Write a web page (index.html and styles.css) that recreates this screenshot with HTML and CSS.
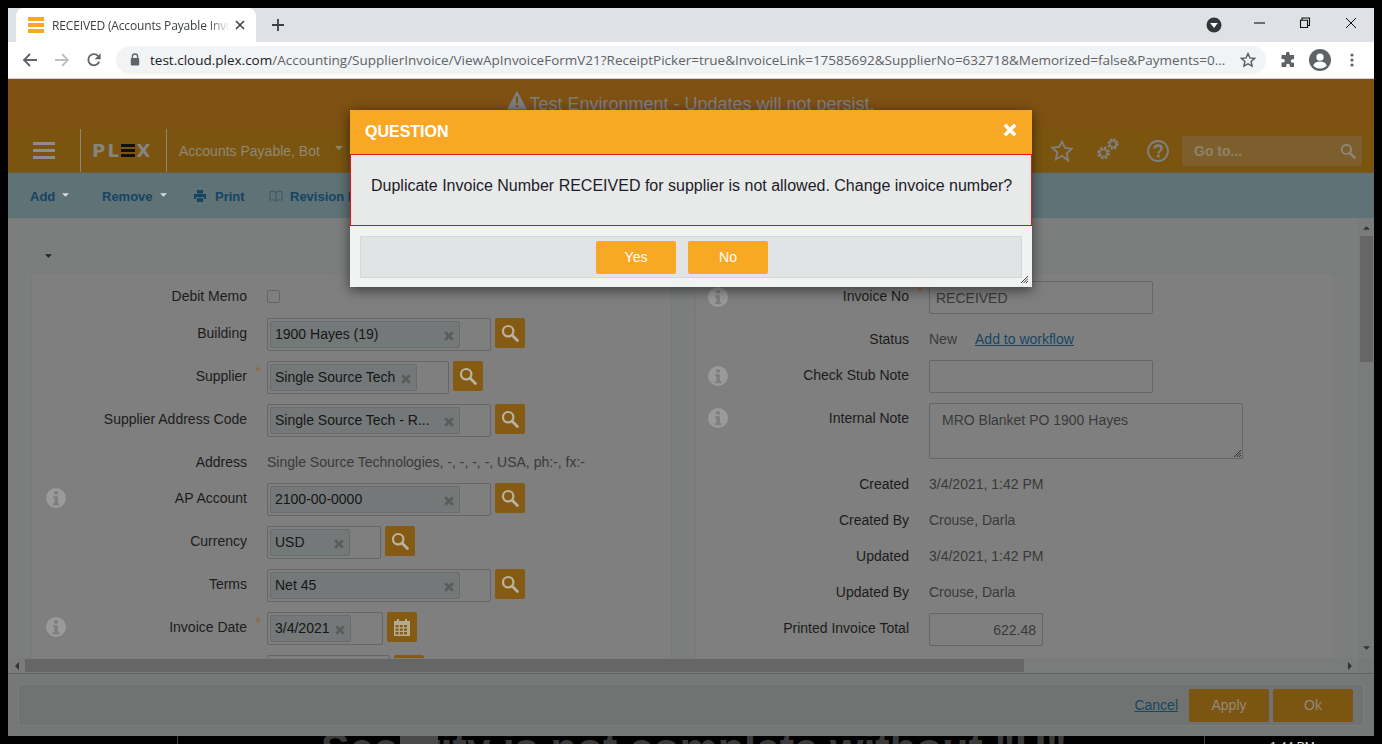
FILE: index.html
```html
<!DOCTYPE html>
<html lang="en">
<head>
<meta charset="utf-8">
<title>RECEIVED (Accounts Payable Invoice)</title>
<link rel="stylesheet" href="styles.css">
</head>
<body>
<svg class="defs" width="0" height="0" aria-hidden="true">
  <symbol id="i-search" viewBox="0 0 18 18"><circle cx="7.2" cy="7.2" r="5.200" fill="none" stroke="currentColor" stroke-width="2.200"/><path d="M11 11l5.400 5.400" stroke="currentColor" stroke-width="2.800" stroke-linecap="round"/></symbol>
  <symbol id="i-x" viewBox="0 0 10 10"><path d="M1.200 1.200l7.600 7.600M8.800 1.200l-7.600 7.600" stroke="currentColor" stroke-width="2.800"/></symbol>
  <symbol id="i-info" viewBox="0 0 20 20"><circle cx="10" cy="10" r="10" fill="currentColor"/><rect x="8" y="3.200" width="4" height="3.400" rx="1" fill="#7f7f7f"/><path d="M7 8.200h5v7h1.400v2H6.800v-2h1.600v-5H7z" fill="#7f7f7f"/></symbol>
  <symbol id="i-caret" viewBox="0 0 8 4"><path d="M0 0h8L4 4z" fill="currentColor"/></symbol>
</svg>

<div class="window">
  <header class="tabstrip">
    <div class="tab">
      <span class="favicon"><i></i><i></i><i></i></span>
      <span class="tab-title">RECEIVED (Accounts Payable Invoice)</span>
      <svg class="tab-close" viewBox="0 0 10 10"><path d="M1 1l8 8M9 1l-8 8" stroke="#3c4043" stroke-width="1.600"/></svg>
    </div>
    <svg class="new-tab" viewBox="0 0 12 12"><path d="M6 0v12M0 6h12" stroke="#3c4043" stroke-width="1.800"/></svg>
    <svg class="download" viewBox="0 0 16 16"><circle cx="8" cy="8" r="7.500" fill="#35363a"/><path d="M4.200 6h7.600L8 11z" fill="#fff"/></svg>
    <div class="win-btns">
      <svg viewBox="0 0 12 12"><path d="M1 6h11" stroke="#111" stroke-width="1.100"/></svg>
      <svg viewBox="0 0 12 12"><path d="M3 3V1h7.500v7.500H8.500M1.500 3.200h7v7.300h-7z" fill="none" stroke="#111" stroke-width="1.100"/></svg>
      <svg viewBox="0 0 12 12"><path d="M1 1l10 10M11 1L1 11" stroke="#111" stroke-width="1"/></svg>
    </div>
  </header>

  <div class="toolbar">
    <svg class="nav-ic" viewBox="0 0 16 16"><path d="M15 8H2M8 2L2 8l6 6" fill="none" stroke="#5f6368" stroke-width="1.800"/></svg>
    <svg class="nav-ic" viewBox="0 0 16 16"><path d="M1 8h13M8 2l6 6-6 6" fill="none" stroke="#bdc1c6" stroke-width="1.800"/></svg>
    <svg class="nav-ic" viewBox="0 0 16 16"><path d="M13.200 9.600A5.600 5.600 0 1 1 12 3.900" fill="none" stroke="#5f6368" stroke-width="1.800"/><path d="M14.600 1.200v6h-6z" fill="#5f6368"/></svg>
    <div class="omnibox">
      <svg class="lock" viewBox="0 0 10 13"><path d="M2.400 5.500V3.600a2.600 2.600 0 0 1 5.200 0v1.900" fill="none" stroke="#5f6368" stroke-width="1.300"/><rect x="0.800" y="5" width="8.400" height="7.400" rx="1" fill="#5f6368"/></svg>
      <span class="url"><b>test.cloud.plex.com</b>/Accounting/SupplierInvoice/ViewApInvoiceFormV21?ReceiptPicker=true&amp;InvoiceLink=17585692&amp;SupplierNo=632718&amp;Memorized=false&amp;Payments=0...</span>
      <svg class="omni-star" viewBox="0 0 16 16"><path d="M8 1.600l1.900 4.300 4.700.5-3.500 3.100 1 4.600L8 11.800l-4.100 2.300 1-4.600L1.400 6.400l4.700-.5z" fill="none" stroke="#5f6368" stroke-width="1.500"/></svg>
    </div>
    <svg class="ext" viewBox="0 0 16 16"><path d="M6 1.500a1.800 1.800 0 0 1 3.600 0V3H14v4.200h-1.400a1.800 1.800 0 0 0 0 3.600H14V15H9.800v-1.400a1.800 1.800 0 0 0-3.600 0V15H1.500v-4.400H3a1.800 1.800 0 0 0 0-3.600H1.500V3H6z" fill="#5f6368"/></svg>
    <svg class="avatar" viewBox="0 0 22 22"><circle cx="11" cy="11" r="11" fill="#5f6368"/><circle cx="11" cy="8.200" r="3.600" fill="#fff"/><path d="M4.200 16.200c1.400-2.500 4-3.600 6.800-3.600s5.400 1.100 6.800 3.600A8.600 8.600 0 0 1 11 19.400a8.600 8.600 0 0 1-6.800-3.200z" fill="#fff"/></svg>
    <svg class="dots" viewBox="0 0 4 14"><circle cx="2" cy="2" r="1.600" fill="#5f6368"/><circle cx="2" cy="7" r="1.600" fill="#5f6368"/><circle cx="2" cy="12" r="1.600" fill="#5f6368"/></svg>
  </div>

  <main class="page">
    <div class="banner">
      <svg class="warn" viewBox="0 0 20 20"><path d="M10 0.500L20 19.500H0z" fill="#7e7e7e"/><path d="M8.800 6.500h2.400l-.4 7H9.200zM8.800 15h2.400v2.500H8.800z" fill="#7f5112"/></svg>
      <span>Test Environment - Updates will not persist.</span>
    </div>

    <nav class="topnav">
      <div class="burger"><i></i><i></i><i></i></div>
      <div class="logo"><span class="logo-pl">PL</span><span class="logo-e"><i></i><i></i><i></i></span><span>X</span></div>
      <div class="user">Accounts Payable, Bot<svg class="user-caret"><use href="#i-caret"/></svg></div>
      <div class="nav-right">
        <svg class="nav-star" viewBox="0 0 24 24"><path d="M12 2.500l2.900 6.400 6.900.8-5.100 4.700 1.400 6.900L12 16.800l-6.100 3.500 1.400-6.900-5.100-4.700 6.900-.8z" fill="none" stroke="#808080" stroke-width="1.800"/></svg>
        <svg class="nav-gears" viewBox="0 0 24 24"><circle cx="7.500" cy="16" r="5" fill="none" stroke="#808080" stroke-width="2.800" stroke-dasharray="2.400 1.500"/><circle cx="7.500" cy="16" r="3.600" fill="none" stroke="#808080" stroke-width="1.500"/><circle cx="17" cy="7" r="4.400" fill="none" stroke="#808080" stroke-width="2.600" stroke-dasharray="2.200 1.250"/><circle cx="17" cy="7" r="3.100" fill="none" stroke="#808080" stroke-width="1.400"/></svg>
        <svg class="nav-help" viewBox="0 0 24 24"><circle cx="12" cy="12" r="10" fill="none" stroke="#808080" stroke-width="1.800"/><path d="M8.500 9.500C8.700 7.500 10.200 6.500 12.100 6.500c2.100 0 3.500 1.200 3.500 3 0 2.500-3.200 2.600-3.200 5" fill="none" stroke="#808080" stroke-width="2.300"/><rect x="11" y="15.800" width="2.700" height="2.500" fill="#808080"/></svg>
        <div class="goto"><span>Go to...</span><svg><use href="#i-search"/></svg></div>
      </div>
    </nav>

    <div class="actions">
      <span class="act act-add">Add<svg class="act-caret"><use href="#i-caret"/></svg></span>
      <span class="act act-remove">Remove<svg class="act-caret"><use href="#i-caret"/></svg></span>
      <span class="act act-print"><svg class="act-ic" viewBox="0 0 12 12"><path d="M3 0h6v3.500H3zM0 4h12v5h-2V7H2v2H0zM3 8h6v4H3z" fill="#164463"/></svg>Print</span>
      <span class="act"><svg class="act-ic book" viewBox="0 0 14 12"><path d="M7 2.500C5.500 1.300 3 1 1 1.500v8.500c2-.5 4.500-.2 6 1 1.500-1.200 4-1.500 6-1V1.500C11 1 8.500 1.300 7 2.500zM7 2.500V11" fill="none" stroke="#3f5a68" stroke-width="1.100"/></svg>Revision History</span>
    </div>

    <div class="workspace">
      <div class="scroller">
        <svg class="collapse"><use href="#i-caret"/></svg>
        <div class="cards">
          <section class="card card-left">
            <div class="row row-check"><span class="slot"></span><label class="label">Debit Memo</label><span class="req"></span><span class="checkbox"></span></div>
            <div class="row"><span class="slot"></span><label class="label">Building</label><span class="req"></span>
              <div class="box box-wide"><span class="chip"><span class="chip-t">1900 Hayes (19)</span><svg class="chip-x"><use href="#i-x"/></svg></span></div><span class="pick"><svg><use href="#i-search"/></svg></span></div>
            <div class="row"><span class="slot"></span><label class="label">Supplier</label><span class="req">*</span>
              <div class="box box-sup"><span class="chip"><span class="chip-t">Single Source Tech</span><svg class="chip-x"><use href="#i-x"/></svg></span></div><span class="pick"><svg><use href="#i-search"/></svg></span></div>
            <div class="row"><span class="slot"></span><label class="label">Supplier Address Code</label><span class="req"></span>
              <div class="box box-wide"><span class="chip"><span class="chip-t">Single Source Tech - R...</span><svg class="chip-x"><use href="#i-x"/></svg></span></div><span class="pick"><svg><use href="#i-search"/></svg></span></div>
            <div class="row row-addr"><span class="slot"></span><label class="label">Address</label><span class="req"></span><span class="value">Single Source Technologies, -, -, -, -, USA, ph:-, fx:-</span></div>
            <div class="row"><span class="slot"><svg class="info"><use href="#i-info"/></svg></span><label class="label">AP Account</label><span class="req"></span>
              <div class="box box-wide"><span class="chip"><span class="chip-t">2100-00-0000</span><svg class="chip-x"><use href="#i-x"/></svg></span></div><span class="pick"><svg><use href="#i-search"/></svg></span></div>
            <div class="row"><span class="slot"></span><label class="label">Currency</label><span class="req"></span>
              <div class="box box-cur"><span class="chip"><span class="chip-t">USD</span><svg class="chip-x"><use href="#i-x"/></svg></span></div><span class="pick"><svg><use href="#i-search"/></svg></span></div>
            <div class="row"><span class="slot"></span><label class="label">Terms</label><span class="req"></span>
              <div class="box box-wide"><span class="chip"><span class="chip-t">Net 45</span><svg class="chip-x"><use href="#i-x"/></svg></span></div><span class="pick"><svg><use href="#i-search"/></svg></span></div>
            <div class="row"><span class="slot"><svg class="info"><use href="#i-info"/></svg></span><label class="label">Invoice Date</label><span class="req">*</span>
              <div class="box box-date"><span class="chip"><span class="chip-t">3/4/2021</span><svg class="chip-x"><use href="#i-x"/></svg></span></div>
              <span class="pick"><svg viewBox="0 0 18 18"><path d="M1 3h3V1h2v2h6V1h2v2h3v15H1zM2.500 7v2.300h3V7zm4.300 0v2.300h3V7zm4.200 0v2.300h3V7zM2.500 10.500v2.300h3v-2.300zm4.300 0v2.300h3v-2.300zm4.200 0v2.300h3v-2.300zM2.500 14v2.500h3V14zm4.300 0v2.500h3V14zm4.200 0v2.500h3V14z" fill="#b5ab95" fill-rule="evenodd"/></svg></span></div>
            <div class="row"><span class="slot"></span><label class="label"></label><span class="req"></span>
              <div class="box box-last"></div><span class="pick"></span></div>
          </section>

          <section class="card card-right">
            <div class="row row-tight"><span class="slot"><svg class="info"><use href="#i-info"/></svg></span><label class="label">Invoice No</label><span class="req">*</span><div class="box box-input">RECEIVED</div></div>
            <div class="row row-status"><span class="slot"></span><label class="label">Status</label><span class="req"></span><span class="value">New</span><a class="link" href="#">Add to workflow</a></div>
            <div class="row"><span class="slot"><svg class="info"><use href="#i-info"/></svg></span><label class="label">Check Stub Note</label><span class="req"></span><div class="box box-input"></div></div>
            <div class="row row-note"><span class="slot slot-top"><svg class="info"><use href="#i-info"/></svg></span><label class="label label-top">Internal Note</label><span class="req"></span>
              <div class="box box-area">MRO Blanket PO 1900 Hayes<svg class="grip" viewBox="0 0 8 8"><path d="M8 1L1 8M8 3.500L3.500 8M8 6L6 8" stroke="#333" stroke-width="1"/></svg></div></div>
            <div class="row row-text"><span class="slot"></span><label class="label">Created</label><span class="req"></span><span class="value">3/4/2021, 1:42 PM</span></div>
            <div class="row row-text"><span class="slot"></span><label class="label">Created By</label><span class="req"></span><span class="value">Crouse, Darla</span></div>
            <div class="row row-text"><span class="slot"></span><label class="label">Updated</label><span class="req"></span><span class="value">3/4/2021, 1:42 PM</span></div>
            <div class="row row-text"><span class="slot"></span><label class="label">Updated By</label><span class="req"></span><span class="value">Crouse, Darla</span></div>
            <div class="row row-total"><span class="slot"></span><label class="label">Printed Invoice Total</label><span class="req"></span><div class="box box-total">622.48</div></div>
          </section>
        </div>
      </div>
      <div class="vscroll">
        <svg class="arrow arrow-h"><use href="#i-caret"/></svg>
        <div class="vthumb"></div>
        <svg class="arrow arrow-h arrow-down"><use href="#i-caret"/></svg>
      </div>
    </div>

    <div class="hscroll">
      <span class="hbtn"><svg viewBox="0 0 4 8"><path d="M4 0v8L0 4z" fill="#333"/></svg></span>
      <div class="hthumb"></div>
      <span class="hbtn hbtn-end"><svg viewBox="0 0 4 8"><path d="M0 0v8l4-4z" fill="#333"/></svg></span>
      <span class="hcorner"></span>
    </div>

    <footer class="footer">
      <div class="footer-inner">
        <a class="link" href="#">Cancel</a>
        <span class="dim-btn">Apply</span>
        <span class="dim-btn">Ok</span>
      </div>
    </footer>

    <div class="modal" role="dialog">
      <div class="modal-head"><span>QUESTION</span><svg class="modal-x" viewBox="0 0 14 14"><path d="M1.800 1.800l10.400 10.400M12.200 1.800L1.800 12.200" stroke="#fff" stroke-width="3.600"/></svg></div>
      <div class="modal-body">Duplicate Invoice Number RECEIVED for supplier is not allowed. Change invoice number?</div>
      <div class="modal-foot">
        <div class="modal-btns"><button class="btn">Yes</button><button class="btn">No</button></div>
        <svg class="modal-grip" viewBox="0 0 8 8"><path d="M8 1L1 8M8 3.500L3.500 8M8 6L6 8" stroke="#444" stroke-width="1"/></svg>
      </div>
    </div>
  </main>
</div>

<div class="desktop">
  <span class="desk-rule desk-a"></span>
  <span class="desk-text">Security is not complete without "U"</span>
  <span class="desk-box"></span>
  <span class="desk-rule desk-b"></span>
  <span class="desk-time">1:44 PM</span>
</div>
</body>
</html>
```

FILE: styles.css
```css
* { box-sizing: border-box; }
html, body { margin: 0; height: 744px; overflow: hidden; background: #000; }
body { padding: 8px 8px 0; font-family: "Liberation Sans", Arial, sans-serif; font-size: 14px; color: #1c1c1c; }
.defs { display: block; height: 0; }
svg { display: block; flex: none; }
i { display: block; }
a { color: inherit; }

.window { width: 1366px; height: 728px; display: flex; flex-direction: column; }

/* browser chrome */
.tabstrip { height: 34px; background: #dee1e6; display: flex; align-items: center; padding-left: 8px; flex: none; }
.tab { width: 240px; height: 34px; background: #fff; border-radius: 8px 8px 0 0; display: flex; align-items: center; padding: 0 11px 0 12px; }
.favicon { width: 16px; height: 16px; display: flex; flex-direction: column; justify-content: space-between; margin-right: 8px; flex: none; }
.favicon i { height: 4px; background: #f9a825; }
.tab-title { width: 178px; overflow: hidden; white-space: nowrap; font: 12px "Open Sans", sans-serif; letter-spacing: -.15px; color: #3c4043; -webkit-mask-image: linear-gradient(90deg, #000 88%, transparent); mask-image: linear-gradient(90deg, #000 88%, transparent); flex: none; }
.tab-close { width: 10px; height: 10px; margin-left: auto; }
.new-tab { width: 12px; height: 12px; margin-left: 16px; }
.download { width: 16px; height: 16px; margin-left: 922px; }
.win-btns { display: flex; gap: 34px; margin-left: 31px; align-items: center; }
.win-btns svg { width: 12px; height: 12px; margin-top: -5px; }

.toolbar { height: 37px; background: #fff; border-bottom: 1px solid #d0d2d5; display: flex; align-items: center; padding-left: 14px; flex: none; padding-bottom: 1px; }
.nav-ic { width: 16px; height: 16px; margin-right: 16px; }
.omnibox { width: 1150px; height: 28px; margin-left: -2px; border-radius: 14px; background: #f1f3f4; display: flex; align-items: center; padding-left: 14px; flex: none; }
.lock { width: 10px; height: 13px; margin-right: 10px; }
.url { width: 1078px; white-space: nowrap; overflow: hidden; font: 13.5px "Open Sans", sans-serif; color: #5f6368; flex: none; }
.url b { font-weight: 400; color: #202124; }
.omni-star { width: 16px; height: 16px; margin-left: 12px; }
.ext { width: 16px; height: 16px; margin-left: 14px; }
.avatar { width: 22px; height: 22px; margin-left: 13px; }
.dots { width: 4px; height: 14px; margin-left: 19px; }

/* page */
.page { position: relative; flex: 1; display: flex; flex-direction: column; min-height: 0; background: #7c7e7e; overflow: hidden; }
.banner { height: 50px; background: #7f5112; flex: none; display: flex; justify-content: center; align-items: flex-start; padding-top: 12px; gap: 2px; font-size: 18px; line-height: 27px; color: #7e7e7e; }
.warn { width: 20px; height: 20px; margin-top: -1px; }
.topnav { height: 44px; background: #7b5510; flex: none; display: flex; align-items: stretch; border-bottom: 1px solid #6f5a30; }
.burger { width: 73px; border-right: 1px solid #8c8674; display: flex; flex-direction: column; justify-content: center; gap: 4px; padding-left: 25px; }
.burger i { width: 22px; height: 3px; background: #8c8c8c; }
.logo { width: 86px; border-right: 1px solid #8c8674; display: flex; align-items: center; padding: 0 0 0 11px; font: bold 18px/1 "DejaVu Sans", sans-serif; color: #85857f; }
.logo-pl { letter-spacing: 2.400px; }
.logo-e { width: 14px; height: 13px; display: flex; flex-direction: column; justify-content: space-between; margin: 0 1px 0 0; }
.logo-e i { height: 3px; background: #111; }
.user { display: flex; align-items: center; padding-left: 12px; color: #8e8878; font-size: 14px; width: 300px; }
.user-caret { width: 8px; height: 4px; margin: -6px 0 0 15px; color: #8e8878; }
.nav-right { margin-left: auto; display: flex; align-items: center; padding-right: 12px; }
.nav-star { width: 24px; height: 24px; }
.nav-gears { width: 24px; height: 24px; margin-left: 22px; margin-top: -3px; }
.nav-help { width: 24px; height: 24px; margin-left: 26px; }
.goto { width: 180px; height: 30px; margin-left: 12px; background: #7d5f2e; border-radius: 2px; display: flex; align-items: center; justify-content: space-between; padding: 0 6px 0 12px; font-weight: bold; font-size: 14px; color: #8c8468; }
.goto svg { width: 16px; height: 16px; color: #8c8778; }

.actions { height: 45px; background: #5f7276; flex: none; display: flex; align-items: center; font-weight: bold; font-size: 13px; color: #164463; padding: 1px 0 0 22px; white-space: nowrap; }
.act { display: flex; align-items: center; }
.act-add { width: 72px; }
.act-remove { width: 92px; }
.act-print { width: 75px; }
.act-caret { width: 7px; height: 4px; margin: -3px 0 0 7px; color: #d9dcdc; }
.act-ic { width: 12px; height: 12px; margin-right: 9px; }
.act-ic.book { width: 14px; margin-right: 7px; }

.workspace { flex: 1; display: flex; min-height: 0; }
.scroller { flex: 1; min-width: 0; overflow: hidden; padding: 36px 0 0 23px; }
.collapse { width: 7px; height: 4px; margin: 0 0 15px 14px; color: #222; }
.cards { display: flex; gap: 23px; align-items: flex-start; }
.card { background: #7f7f7f; border: 1px solid #797b7b; height: 430px; }
.card-left { width: 641px; padding: 11px 0 0 14px; }
.card-right { width: 639px; padding: 7px 0 0 12px; }

.row { display: flex; align-items: center; min-height: 33px; margin-bottom: 10px; }
.slot { width: 20px; flex: none; padding-bottom: 4px; }
.card-right .slot { padding-bottom: 2px; }
.label { width: 181px; flex: none; text-align: right; padding-bottom: 4px; white-space: nowrap; min-height: 1px; }
.req { width: 20px; flex: none; align-self: flex-start; padding: 4px 0 0 8px; font-size: 16px; line-height: 16px; color: #8f6a3c; }
.value { color: #3a3a3a; white-space: nowrap; }
.info { width: 20px; height: 20px; color: #9a9a9a; }
.row-check { min-height: 22px; margin-bottom: 11px; }
.row-check .label { padding-bottom: 0; }
.checkbox { width: 13px; height: 13px; border: 1px solid #646464; border-radius: 2px; }
.row-addr { min-height: 26px; padding-top: 3px; }
.row-addr .label { padding-bottom: 0; }
.row-tight { margin-bottom: 0; }
.row-status { min-height: 46px; padding-top: 4px; margin-bottom: 0; }
.row-status .link { margin-left: 18px; }
.row-status .label, .row-text .label { padding-bottom: 0; }
.row-note { margin-bottom: 7px; align-items: flex-start; }
.card-right .slot-top { padding: 5px 0 0; }
.label-top { padding: 7px 0 0; }
.row-text { min-height: 36px; margin-bottom: 0; }
.row-total { margin-top: 3px; }

.box { height: 33px; border: 1px solid #666; border-radius: 2px; padding: 2px; flex: none; display: flex; }
.box-wide { width: 224px; }
.box-sup { width: 182px; }
.box-cur { width: 114px; }
.box-date { width: 116px; }
.box-last { width: 123px; }
.box-wide .chip { width: 190px; }
.box-sup .chip { width: 147px; }
.box-cur .chip { width: 80px; }
.box-date .chip { width: 81px; }
.chip { height: 27px; border: 1px solid #696c6c; border-radius: 2px; background: #757878; display: flex; align-items: center; padding: 0 5px 0 4px; color: #161616; white-space: nowrap; overflow: hidden; }
.chip-t { line-height: 16px; margin-top: -2px; }
.chip-x { width: 10px; height: 10px; margin-left: auto; margin-top: 2px; color: #5c5c5c; }
.pick { width: 30px; height: 30px; margin-left: 4px; border-radius: 2px; background: #855a13; display: flex; align-items: center; justify-content: center; flex: none; align-self: flex-start; }
.pick svg { width: 18px; height: 18px; color: #b9b2a2; }
.box-input { width: 224px; padding: 0 6px; align-items: center; color: #3a3a3a; }
.box-area { width: 314px; height: 56px; padding: 8px 12px; color: #3a3a3a; position: relative; display: block; }
.grip { position: absolute; right: 1px; bottom: 1px; width: 8px; height: 8px; }
.box-total { width: 114px; justify-content: flex-end; align-items: center; padding: 0 6px; color: #3a3a3a; }
.link { color: #17465f; text-decoration: underline; }

.vscroll { width: 16px; flex: none; display: flex; flex-direction: column; align-items: center; background: #7a7c7c; padding-top: 8px; }
.arrow { width: 7px; height: 4px; color: #333; }
.arrow-h { transform: scaleY(-1); }
.arrow-down { margin-top: auto; margin-bottom: 8px; transform: none; }
.vthumb { width: 13px; height: 126px; margin-top: 6px; background: #666; }

.hscroll { height: 15px; flex: none; display: flex; align-items: center; background: #7a7c7c; }
.hbtn { width: 17px; height: 15px; display: flex; align-items: center; justify-content: center; flex: none; }
.hbtn svg { width: 4px; height: 8px; }
.hthumb { width: 999px; height: 13px; background: #666; flex: none; }
.hbtn-end { margin-left: auto; }
.hcorner { width: 16px; height: 15px; flex: none; background: #777979; }

.footer { height: 63px; flex: none; background: #767878; border-top: 1px solid #636565; padding: 10px; }
.footer-inner { height: 42px; background: #707372; border: 1px solid #7b7d7d; display: flex; align-items: center; justify-content: flex-end; gap: 4px; padding-right: 10px; }
.footer-inner .link { margin-right: 7px; }
.dim-btn { width: 80px; height: 33px; border-radius: 2px; background: #7d5513; color: #8f8b7a; display: flex; align-items: center; justify-content: center; }

/* dialog */
.modal { position: absolute; left: 342px; top: 31px; width: 682px; height: 177px; background: #f1f3f3; box-shadow: 0 3px 12px rgba(0,0,0,.55); display: flex; flex-direction: column; }
.modal-head { height: 44px; background: #f9a825; display: flex; align-items: center; justify-content: space-between; padding: 0 15px; color: #fff; font-weight: bold; font-size: 16px; flex: none; }
.modal-x { width: 14px; height: 14px; margin-top: -4px; }
.modal-body { height: 72px; background: #e8e9e9; border: 1px solid #e3191c; border-bottom-color: #cf1216; padding: 21px 20px 0; font-size: 16px; line-height: 20px; color: #1c1c2a; white-space: nowrap; flex: none; }
.modal-foot { flex: 1; position: relative; padding: 10px 10px 9px; }
.modal-btns { height: 42px; background: #e1e4e4; border: 1px solid #d4d8d8; display: flex; align-items: center; justify-content: center; gap: 12px; padding-right: 18px; }
.btn { width: 80px; height: 33px; border: 0; border-radius: 2px; background: #f9a825; color: #fff; font: 14px "Liberation Sans", Arial, sans-serif; padding: 0; }
.modal-grip { position: absolute; right: 4px; bottom: 4px; width: 8px; height: 8px; }

/* what shows behind the window */
.desktop { position: relative; height: 8px; width: 1374px; margin-left: -8px; overflow: hidden; display: flex; align-items: flex-start; color: #3a3a3a; }
.desk-rule { width: 1px; height: 8px; background: #444; flex: none; }
.desk-a { margin-left: 177px; }
.desk-text { margin-left: 143px; font: bold 43px/43px "Liberation Sans", Arial, sans-serif; white-space: nowrap; margin-top: -9px; width: 883px; flex: none; }
.desk-box { position: absolute; left: 400px; top: 0; width: 38px; height: 8px; background: #4a4a4a; }
.desk-time { margin-left: 65px; font-size: 12px; line-height: 12px; color: #ddd; margin-top: 5px; white-space: nowrap; }
```
